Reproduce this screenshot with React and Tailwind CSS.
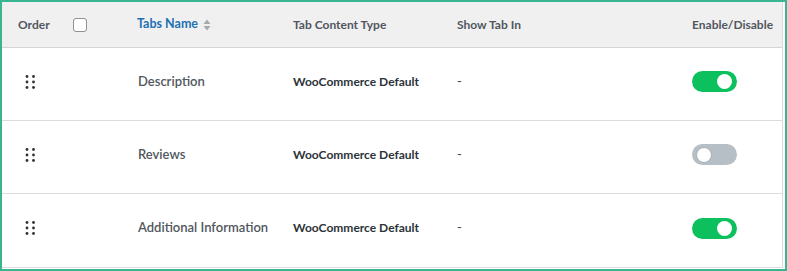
import React from "react";

function Dots() {
  return (
    <svg width="12" height="14" viewBox="0 0 12 14" className="block">
      {[1.5, 7, 12.5].map((y) =>
        [2, 8.5].map((x) => <circle key={x + "-" + y} cx={x} cy={y} r="1.4" fill="#2c3338" />)
      )}
    </svg>
  );
}

function Toggle({ on }) {
  return on ? (
    <div className="w-[45px] h-[21px] rounded-full bg-[#0cc15d] flex items-center justify-end pr-[5px]">
      <div className="w-[15px] h-[15px] rounded-full bg-white" />
    </div>
  ) : (
    <div className="w-[45px] h-[21px] rounded-full bg-[#b6bfc5] flex items-center justify-start pl-[4px]">
      <div className="w-[16px] h-[16px] rounded-full bg-white border border-[#a9b1b7]" />
    </div>
  );
}

const rows = [
  { name: "Description", on: true },
  { name: "Reviews", on: false },
  { name: "Additional Information", on: true },
];

export default function App() {
  return (
    <div
      className="w-[787px] h-[271px] border-2 border-[#3ab592] bg-white text-[13px]"
      style={{ fontFamily: "Lato, 'Open Sans', sans-serif" }}
    >
      <div className="w-[781px] border-r border-b border-[#dcdcde]">
        <div className="grid grid-cols-[135px_156px_163px_1fr_90px] h-[46px] bg-[#f0f0f1] border-b border-[#d4d4d6] items-center font-bold text-[12px] text-[#50575e]">
          <div className="flex items-center pl-4">
            <span className="w-[55px]">Order</span>
            <span className="w-[14px] h-[14px] rounded-[3px] border border-[#8c8f94] bg-white" />
          </div>
          <div className="flex items-center gap-[5px] text-[#2271b1]">
            <span className="text-[12.5px]">Tabs Name</span>
            <svg width="8" height="12" viewBox="0 0 8 12">
              <path d="M4 0.5 L7.5 5 L0.5 5 Z" fill="#a7aaad" />
              <path d="M4 11.5 L7.5 7 L0.5 7 Z" fill="#a7aaad" />
            </svg>
          </div>
          <div>Tab Content Type</div>
          <div className="pl-[1px]">Show Tab In</div>
          <div>Enable/Disable</div>
        </div>
        {rows.map((r, i) => (
          <div
            key={r.name}
            className={
              "grid grid-cols-[135px_156px_163px_1fr_90px] h-[73px] items-center pb-[5px] " +
              (i < rows.length - 1 ? "border-b border-[#dcdcde]" : "")
            }
          >
            <div className="pl-[23px]">
              <Dots />
            </div>
            <div className="font-semibold text-[#50575e] pl-[1px]">{r.name}</div>
            <div className="font-bold text-[12px] text-[#2c3338]">WooCommerce Default</div>
            <div className="text-[#3c434a] pl-[1px]">-</div>
            <div>
              <Toggle on={r.on} />
            </div>
          </div>
        ))}
      </div>
    </div>
  );
}
